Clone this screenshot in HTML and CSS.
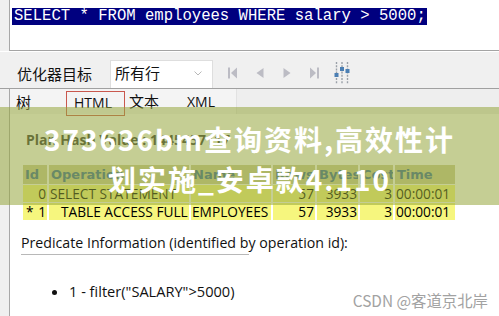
FILE: index.html
```html
<!DOCTYPE html>
<html lang="zh">
<head>
<meta charset="utf-8">
<title>执行计划</title>
<link rel="stylesheet" href="styles.css">
</head>
<body>
<div class="app">
  <div class="editor">
    <div class="gutter"></div>
    <div class="editor-pane"><span class="sql">SELECT * FROM employees WHERE salary &gt; 5000;</span></div>
  </div>

  <div class="toolbar">
    <span class="label">优化器目标</span>
    <div class="select">
      <span>所有行</span>
      <svg class="chev" width="8" height="5" viewBox="0 0 8 5"><path d="M0.5 0.5 L4 4 L7.5 0.5" fill="none" stroke="#b8b8b8" stroke-width="1"/></svg>
    </div>
    <div class="nav">
      <svg width="14" height="14" viewBox="0 0 14 14"><rect x="2" y="1.5" width="2" height="11" fill="#bcbcc4"/><path d="M11 1.5 L5 7 L11 12.5 Z" fill="#bcbcc4"/></svg>
      <svg width="14" height="14" viewBox="0 0 14 14"><path d="M10.5 2 L3.5 7 L10.5 12 Z" fill="#bcbcc4"/></svg>
      <svg width="14" height="14" viewBox="0 0 14 14"><path d="M3.5 2 L10.5 7 L3.5 12 Z" fill="#bcbcc4"/></svg>
      <svg width="14" height="14" viewBox="0 0 14 14"><path d="M3 1.5 L9 7 L3 12.5 Z" fill="#bcbcc4"/><rect x="10" y="1.5" width="2" height="11" fill="#bcbcc4"/></svg>
      <svg class="sliders" width="16" height="22" viewBox="0 0 16 22">
        <g stroke="#9aa0a8" stroke-width="1.4" stroke-dasharray="2 1.2">
          <line x1="2.5" y1="0" x2="2.5" y2="22"/>
          <line x1="8" y1="0" x2="8" y2="22"/>
          <line x1="13.5" y1="0" x2="13.5" y2="22"/>
        </g>
        <rect x="0.5" y="11" width="4" height="4" fill="#4b7fb3"/>
        <rect x="6" y="5" width="4" height="4" fill="#4b7fb3"/>
        <rect x="11.5" y="7" width="4" height="4" fill="#4b7fb3"/>
      </svg>
    </div>
  </div>

  <div class="tabs">
    <div class="gutter"></div>
    <div class="tabbar">
      <span class="tab tab-tree">树</span>
      <span class="tab tab-html">HTML</span>
      <span class="tab tab-text">文本</span>
      <span class="tab tab-xml">XML</span>
    </div>
    <div class="tabrest"></div>
  </div>

  <div class="content">
    <div class="gutter"></div>
    <div class="pane">
      <div class="plan-hash">Plan Hash Value : 1445457117</div>
      <table class="plan">
        <colgroup>
          <col class="c-id"><col class="c-op"><col class="c-name"><col class="c-rows"><col class="c-bytes"><col class="c-cost"><col class="c-time">
        </colgroup>
        <thead>
          <tr><th>Id</th><th>Operation</th><th>Name</th><th>Rows</th><th>Bytes</th><th>Cost</th><th>Time</th></tr>
        </thead>
        <tbody>
          <tr><td class="num">0</td><td>SELECT STATEMENT</td><td></td><td class="num">57</td><td class="num">3933</td><td class="num">3</td><td>00:00:01</td></tr>
          <tr><td class="num"><span class="star">*</span>1</td><td class="indent">TABLE ACCESS FULL</td><td>EMPLOYEES</td><td class="num">57</td><td class="num">3933</td><td class="num">3</td><td>00:00:01</td></tr>
        </tbody>
      </table>
      <div class="pred-title">Predicate Information (identified by operation id):</div>
      <div class="rule"></div>
      <ul class="pred-list">
        <li>1 - filter("SALARY"&gt;5000)</li>
      </ul>
    </div>
  </div>
</div>

<div class="band"></div>
<div class="band-text">373636bm查询资料,高效性计<br>划实施_安卓款4.110</div>
<div class="watermark">CSDN @客道京北岸</div>
</body>
</html>
```

FILE: styles.css
```css
* { box-sizing: border-box; }

html, body {
  margin: 0;
  padding: 0;
}

body {
  width: 499px;
  height: 316px;
  overflow: hidden;
  position: relative;
  background: #f0f0f0;
  font-family: "Noto Sans CJK SC", "Noto Sans", sans-serif;
  color: #000;
}

.app {
  display: flex;
  flex-direction: column;
  height: 316px;
}

.gutter {
  width: 10px;
  flex: none;
  background: #f0f0f0;
  border-right: 1px solid #a8a8a8;
}

/* editor */
.editor {
  display: flex;
  height: 51px;
}

.editor-pane {
  flex: 1;
  background: #fff;
  border-bottom: 1px solid #a4a4a4;
  padding: 1px 0 0 2px;
}

.sql {
  display: inline-block;
  background: #00007f;
  color: #fff;
  font-family: "Liberation Mono", monospace;
  font-size: 15.6px;
  line-height: 17px;
  padding: 0 1px 0 2px;
  white-space: pre;
}

/* toolbar */
.toolbar {
  display: flex;
  align-items: center;
  height: 38px;
  padding: 8px 0 0 17px;
  border-top: 1px solid #fff;
  border-bottom: 1px solid #a0a0a0;
  box-shadow: 0 1px 0 #fff;
}

.label {
  font-size: 15px;
  line-height: 20px;
  color: #111;
}

.select {
  display: flex;
  align-items: center;
  justify-content: space-between;
  align-self: stretch;
  width: 103px;
  margin-left: 18px;
  padding: 0 10px 4px 4px;
  background: #fff;
  border: 1px solid #dedede;
  border-bottom: none;
  font-size: 15px;
  line-height: 20px;
  color: #111;
}

.chev { margin-top: 1px; }

.nav {
  display: flex;
  align-items: center;
  gap: 13px;
  margin-left: 13px;
  margin-top: -3px;
}

.nav .sliders { margin-left: 0; }

/* tabs */
.tabs {
  display: flex;
  height: 25px;
}

.tabbar {
  position: relative;
  width: 227px;
  background: #f4f4f4;
  border-right: 1px solid #e2e2e2;
  font-size: 14px;
  line-height: 18px;
}

.tabrest {
  flex: 1;
  background: #eeeeee;
}

.tab {
  position: absolute;
  top: 4px;
  color: #111;
}

.tab-tree { left: 6px; font-size: 15px; }
.tab-html {
  left: 56px;
  top: 2px;
  width: 59px;
  height: 25px;
  padding: 2px 0 0 7px;
  border: 1.5px solid #c9584e;
  font-family: "Open Sans", "Noto Sans", sans-serif;
}
.tab-text { left: 119px; font-size: 15px; top: 3px; }
.tab-xml { left: 177px; font-family: "Open Sans", "Noto Sans", sans-serif; }

/* content */
.content {
  display: flex;
  flex: 1;
}

.pane {
  flex: 1;
  background: #fff;
  padding: 17px 0 0 11px;
}

.plan-hash {
  font-family: "Open Sans", sans-serif;
  font-weight: bold;
  font-size: 14px;
  line-height: 18px;
  color: #333;
  padding-left: 5px;
}

.plan {
  margin-top: 15px;
  width: 436px;
  table-layout: fixed;
  border-collapse: separate;
  border-spacing: 2px 1px;
  font-family: "Open Sans", sans-serif;
  font-size: 13.7px;
}

.c-id { width: 24px; }
.c-op { width: 140px; }
.c-name { width: 80px; }
.c-rows { width: 42px; }
.c-bytes { width: 41px; }
.c-cost { width: 33px; }
.c-time { width: 60px; }

.plan th {
  height: 19px;
  padding: 0 2px;
  background: #cccc99;
  color: #336699;
  font-family: "DejaVu Sans", sans-serif;
  font-size: 13px;
  font-weight: bold;
  text-align: left;
  white-space: nowrap;
  overflow: hidden;
}

.plan td {
  height: 17px;
  padding: 0 1px;
  background: #f6f67e;
  line-height: 17px;
  white-space: pre;
  overflow: hidden;
}

.plan td.num { text-align: right; }
.plan td.indent { padding-left: 12px; }
.star { float: left; padding-left: 2px; }

.pred-title {
  margin-top: 13px;
  font-family: "Open Sans", sans-serif;
  font-size: 14.2px;
  line-height: 18px;
  color: #111;
}

.rule {
  width: 228px;
  height: 1px;
  margin-top: 2px;
  background: #b8b8b8;
}

.pred-list {
  margin: 26px 0 0 0;
  padding-left: 48px;
  font-family: "Open Sans", sans-serif;
  font-size: 14.6px;
  line-height: 20px;
  color: #111;
}

.pred-list li { padding-left: 0; }

/* overlay */
.band {
  position: absolute;
  left: 0;
  right: 0;
  top: 107px;
  height: 98px;
  background: rgba(150, 165, 60, 0.55);
}

.band-text {
  position: absolute;
  left: 0;
  right: 0;
  top: 119px;
  text-align: center;
  color: #fff;
  font-family: "Noto Sans CJK SC", sans-serif;
  font-weight: bold;
  font-size: 28px;
  line-height: 40px;
  letter-spacing: 2px;
}

.watermark {
  position: absolute;
  right: 11px;
  top: 290px;
  font-family: "Noto Sans CJK SC", sans-serif;
  font-size: 15.4px;
  line-height: 20px;
  color: #a2a2a2;
  text-shadow: 0 0 2px #fff;
}
```
